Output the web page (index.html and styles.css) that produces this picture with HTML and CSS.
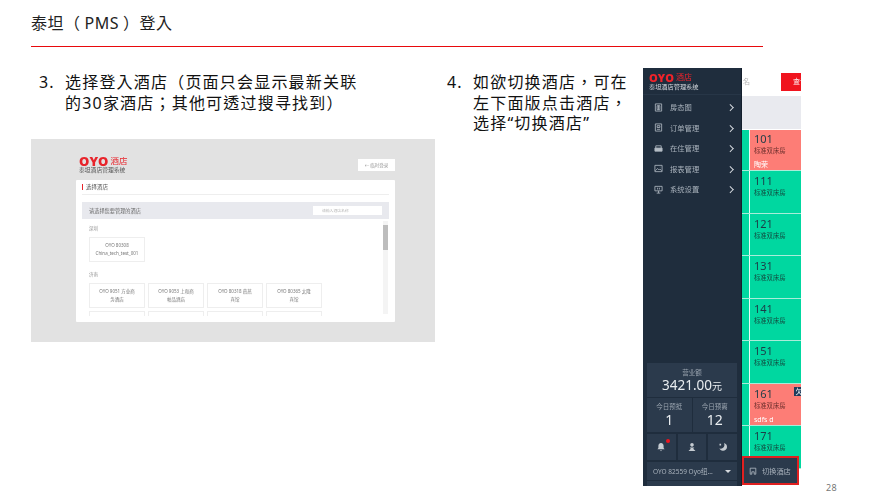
FILE: index.html
```html
<!DOCTYPE html>
<html lang="zh-TW">
<head>
    <meta charset="UTF-8">
    <meta name="viewport" content="width=device-width, initial-scale=1.0">
    <title>泰坦（PMS）登入</title>
    <link rel="stylesheet" href="styles.css">
</head>
<body>
    <div class="slide">
        <h1 class="slide-title">泰坦（<span class="title-latin">PMS</span>）登入</h1>

        <div class="content">
            <div class="col-left">
                <div class="step">
                    <span class="step-no">3.</span>
                    <p>选择登入酒店（页面只会显示最新关联的30家酒店；其他可透过搜寻找到）</p>
                </div>

                <!-- hotel picker screenshot -->
                <div class="shot-hotels">
                    <div class="shot-top">
                        <div class="logo">
                            <div class="logo-main"><b>OYO</b><span>酒店</span></div>
                            <div class="logo-sub">泰坦酒店管理系统</div>
                        </div>
                        <div class="back-btn">← 临时登录</div>
                    </div>
                    <div class="hotel-card">
                        <div class="hotel-card-title">选择酒店</div>
                        <div class="picker-head">
                            <span>请选择您要管理的酒店</span>
                            <div class="picker-search">请输入酒店名称</div>
                        </div>
                        <div class="picker-list">
                            <div class="city">深圳</div>
                            <div class="hotel-row">
                                <div class="hotel">OYO 80308<br>China_tech_test_001</div>
                            </div>
                            <div class="city city-next">济南</div>
                            <div class="hotel-row">
                                <div class="hotel">OYO 9051 方业商<br>务酒店</div>
                                <div class="hotel">OYO 9053 上和商<br>帕品酒店</div>
                                <div class="hotel">OYO 80318 燕燕<br>宾馆</div>
                                <div class="hotel">OYO 80365 太隆<br>宾馆</div>
                            </div>
                            <div class="hotel-row">
                                <div class="hotel"></div>
                                <div class="hotel"></div>
                                <div class="hotel"></div>
                                <div class="hotel"></div>
                            </div>
                            <div class="scrollbar"><div class="scroll-thumb"></div></div>
                        </div>
                    </div>
                </div>
            </div>

            <div class="step step-right">
                <span class="step-no">4.</span>
                <p>如欲切换酒店，可在左下面版点击酒店，选择“切换酒店”</p>
            </div>

            <!-- room board screenshot -->
            <div class="shot-pms">
                <aside class="sidebar">
                    <div class="side-logo">
                        <div class="logo-main"><b>OYO</b><span>酒店</span></div>
                        <div class="logo-sub">泰坦酒店管理系统</div>
                    </div>
                    <ul class="side-menu">
                        <li>
                            <svg viewBox="0 0 10 10"><path d="M1.5 1h7v8h-7zM3.5 3h3v4.500h-3zM5 3v4.500"/></svg>
                            <span>房态图</span><i></i>
                        </li>
                        <li>
                            <svg viewBox="0 0 10 10"><path d="M1.5 1h7v8h-7zM3.500 3h3v2h-3zM3.200 7h3.600"/></svg>
                            <span>订单管理</span><i></i>
                        </li>
                        <li>
                            <svg viewBox="0 0 10 10"><path d="M2 4.500v-2.500h6v2.500"/><path class="solid" d="M1 4.500h8v3.500h-8z"/></svg>
                            <span>在住管理</span><i></i>
                        </li>
                        <li>
                            <svg viewBox="0 0 10 10"><path d="M1 1.500h8v7h-8zM1.500 7.500l2.500-2.500 1.500 1.500 1-1 2 2M6.500 3.500h.5"/></svg>
                            <span>报表管理</span><i></i>
                        </li>
                        <li>
                            <svg viewBox="0 0 10 10"><path d="M1 1.500h8v5h-8zM5 6.500v2.500M3 9h4M4 3v2M6 3v2"/></svg>
                            <span>系统设置</span><i></i>
                        </li>
                    </ul>
                    <div class="side-stats">
                        <div class="revenue">
                            <small>营业额</small>
                            <div class="revenue-num">3421.00<span>元</span></div>
                        </div>
                        <div class="today">
                            <div><small>今日预抵</small><strong>1</strong></div>
                            <div><small>今日预离</small><strong>12</strong></div>
                        </div>
                    </div>
                    <div class="side-tools">
                        <div class="tool tool-bell">
                            <svg viewBox="0 0 10 10"><path class="solid" d="M5 1c-1.800 0-2.600 1.400-2.600 3v2l-1 1.300h7.200l-1-1.300v-2c0-1.600-.8-3-2.600-3zM4 8.300h2l-1 1z"/></svg>
                        </div>
                        <div class="tool">
                            <svg viewBox="0 0 10 10"><path class="solid" d="M5 1a1.800 1.800 0 0 1 1.800 1.800c0 1-.8 1.900-1.800 1.900s-1.800-.9-1.800-1.900a1.800 1.800 0 0 1 1.800-1.800zM2.600 5.500h4.800l-1.200 1.200 2.300 2.300h-7l2.300-2.300z"/></svg>
                        </div>
                        <div class="tool">
                            <svg viewBox="0 0 10 10"><path class="solid" d="M6 1c2 .6 3.200 2.200 3 4.200-.2 2.200-2.200 3.800-4.300 3.600-1.500-.1-2.700-1-3.300-2.200 2.500.5 4.800-.8 5-3 .1-1-.1-1.900-.4-2.600zM1.500 1.800h1.600v1.600h-1.600z"/></svg>
                        </div>
                    </div>
                    <div class="side-select">OYO 82559 Oyo纽...<i></i></div>
                    <div class="side-select side-select-next"></div>
                </aside>

                <div class="board">
                    <div class="board-top">
                        <div class="board-input">名</div>
                        <div class="board-btn">查询</div>
                    </div>
                    <div class="board-band"></div>
                    <div class="rooms">
                        <div class="room room-busy"><b>101</b><small>标准双床房</small><em>陶荣</em></div>
                        <div class="room"><b>111</b><small>标准双床房</small></div>
                        <div class="room"><b>121</b><small>标准双床房</small></div>
                        <div class="room"><b>131</b><small>标准双床房</small></div>
                        <div class="room"><b>141</b><small>标准双床房</small></div>
                        <div class="room"><b>151</b><small>标准双床房</small></div>
                        <div class="room room-busy"><b>161</b><small>标准双床房</small><em>sdfs d</em><span class="badge">欠</span></div>
                        <div class="room"><b>171</b><small>标准双床房</small></div>
                    </div>
                </div>

                <div class="switch-hotel">
                    <svg viewBox="0 0 10 10"><path d="M1.500 1.500h7v7.500h-2v-3h-3v3h-2z"/></svg>
                    <span>切换酒店</span>
                </div>
            </div>

            <div class="page-no">28</div>
        </div>
    </div>
</body>
</html>
```

FILE: styles.css
```css
* {
    box-sizing: border-box;
}

body {
    margin: 0;
    background-color: #fff;
    font-family: "Noto Sans", "Noto Sans CJK TC", sans-serif;
    text-spacing-trim: space-all;
    color: #222;
}

.slide {
    width: 877px;
    height: 501px;
    padding: 0 0 7px 31px;
    display: flex;
    flex-direction: column;
    overflow: hidden;
}

.slide-title {
    width: 732px;
    height: 47px;
    margin: 0;
    padding-top: 11px;
    border-bottom: 1px solid #e8090c;
    font-size: 16px;
    font-weight: 400;
    line-height: 24px;
    letter-spacing: 0.5px;
}

.title-latin {
    margin: 0 4px;
}

.content {
    flex: 1;
    display: flex;
    min-height: 0;
}

.col-left {
    width: 404px;
}

.step {
    display: flex;
    font-size: 16px;
    line-height: 20.5px;
    letter-spacing: 1.2px;
    color: #111;
}

.step p {
    margin: 0;
}

.step-no {
    flex: none;
    width: 26px;
}

.col-left .step {
    height: 92px;
    padding: 25px 70px 0 8px;
}

.step-right {
    width: 196px;
    margin-left: 12px;
    padding: 25px 12px 0 0;
}

/* hotel picker screenshot */
.shot-hotels {
    height: 203px;
    padding: 16px 40px 0 45px;
    background-color: #e2e2e2;
    filter: blur(0.5px);
}

.shot-top {
    height: 25px;
    display: flex;
    justify-content: space-between;
    align-items: flex-start;
    padding-left: 3px;
}

.logo-main {
    display: flex;
    align-items: center;
    height: 12px;
    color: #e8242b;
}

.logo-main b {
    font-size: 13px;
    font-weight: 900;
    letter-spacing: 0.2px;
    line-height: 11px;
}

.logo-main span {
    margin: -1px 0 0 2px;
    font-size: 8.500px;
    line-height: 11px;
}

.logo-sub {
    font-size: 5.800px;
    line-height: 7px;
    color: #555;
}

.back-btn {
    width: 37px;
    height: 12px;
    margin-top: 4px;
    background-color: #fff;
    font-size: 4.500px;
    line-height: 12px;
    text-align: center;
    color: #999;
}

.hotel-card {
    height: 142px;
    padding: 0 6px;
    background-color: #fff;
    border-radius: 1px;
}

.hotel-card-title {
    height: 15px;
    margin-bottom: 7px;
    border-bottom: 1px solid #eee;
    font-size: 5.500px;
    line-height: 14px;
    color: #555;
}

.hotel-card-title::before {
    content: "";
    display: inline-block;
    width: 1px;
    height: 6px;
    margin-right: 3px;
    background-color: #e8242b;
    vertical-align: -1px;
}

.picker-head {
    height: 17px;
    padding: 0 7px;
    display: flex;
    justify-content: space-between;
    align-items: center;
    background-color: #e8e9ee;
    font-size: 5.200px;
    color: #666;
}

.picker-search {
    width: 69px;
    height: 9px;
    padding-left: 9px;
    background-color: #fff;
    font-size: 3.800px;
    line-height: 9px;
    color: #bbb;
}

.picker-list {
    position: relative;
    height: 97px;
    padding: 5px 7px 0;
    overflow: hidden;
}

.city {
    height: 13px;
    font-size: 4.500px;
    line-height: 8px;
    color: #999;
}

.city-next {
    margin-top: 8px;
}

.hotel-row {
    display: flex;
    gap: 3px;
    margin-bottom: 3px;
}

.hotel {
    width: 56px;
    height: 25px;
    padding-top: 4px;
    border: 1px solid #eee;
    font-size: 4.500px;
    line-height: 7.500px;
    text-align: center;
    white-space: nowrap;
    color: #777;
}

.scrollbar {
    position: absolute;
    top: 2px;
    right: 1px;
    bottom: 2px;
    width: 5px;
    background-color: #f4f4f4;
}

.scroll-thumb {
    height: 25px;
    margin-top: 4px;
    background-color: #bdbdbd;
}

/* room board screenshot */
.shot-pms {
    position: relative;
    flex: none;
    width: 158px;
    height: 418px;
    margin: 21px 0 0 0;
    display: flex;
    overflow: hidden;
    filter: blur(0.4px);
}

.sidebar {
    flex: none;
    width: 99px;
    padding: 0 4px;
    background-color: #1f2d3d;
    border-right: 1px solid #141f2c;
    color: #a9b2bc;
}

.side-logo {
    height: 27px;
    margin: 0 -4px;
    padding: 3px 6px 0;
    border-bottom: 1px solid #273647;
}

.side-logo .logo-main {
    height: 12px;
    color: #f0232a;
}

.side-logo .logo-main b {
    font-size: 11px;
}

.side-logo .logo-main span {
    font-size: 8px;
}

.side-logo .logo-sub {
    font-size: 6.200px;
    line-height: 8px;
    color: #d5d9de;
}

.side-menu {
    height: 268px;
    margin: 0;
    padding: 2px 0 0 7px;
    list-style: none;
}

.side-menu li {
    height: 20.500px;
    display: flex;
    align-items: center;
    font-size: 7.300px;
}

.side-menu svg {
    width: 9px;
    height: 9px;
    margin-right: 7px;
    fill: none;
    stroke: #b4bcc5;
    stroke-width: 0.9;
}

.side-menu .solid {
    fill: #b4bcc5;
}

.side-menu span {
    flex: 1;
}

.side-menu i {
    width: 4.500px;
    height: 4.500px;
    margin-right: 5px;
    border-top: 1.200px solid #d5d9de;
    border-right: 1.200px solid #d5d9de;
    transform: rotate(45deg);
}

.side-stats {
    background-color: #2b3a4c;
    text-align: center;
}

.side-stats small {
    display: block;
    font-size: 6.500px;
    line-height: 9px;
    color: #9aa4af;
}

.revenue {
    height: 35px;
    padding-top: 5px;
    border-bottom: 1px solid #1f2d3d;
}

.revenue-num {
    font-size: 13.500px;
    line-height: 16px;
    color: #e9edf0;
}

.revenue-num span {
    font-size: 10px;
}

.today {
    height: 34px;
    display: flex;
}

.today > div {
    flex: 1;
    padding-top: 4px;
}

.today > div + div {
    border-left: 1px solid #1f2d3d;
}

.today strong {
    display: block;
    font-size: 14px;
    font-weight: 400;
    line-height: 17px;
    color: #e9edf0;
}

.side-tools {
    height: 26px;
    margin-top: 2px;
    display: flex;
    gap: 2px;
}

.tool {
    position: relative;
    flex: 1;
    display: flex;
    align-items: center;
    justify-content: center;
    background-color: #2b3a4c;
}

.tool svg {
    width: 10px;
    height: 10px;
}

.tool .solid {
    fill: #c6ccd2;
}

.tool-bell::after {
    content: "";
    position: absolute;
    top: 5px;
    right: 6px;
    width: 4px;
    height: 4px;
    border-radius: 50%;
    background-color: #f0141e;
}

.side-select {
    height: 18px;
    margin-top: 2px;
    padding: 0 6px;
    display: flex;
    align-items: center;
    justify-content: space-between;
    background-color: #2b3a4c;
    font-size: 6.500px;
    color: #a9b2bc;
}

.side-select i {
    width: 0;
    height: 0;
    border-left: 3px solid transparent;
    border-right: 3px solid transparent;
    border-top: 3.500px solid #d5d9de;
}

.side-select-next {
    margin-top: 1px;
}

.board {
    flex: 1;
    min-width: 0;
    background-color: #fff;
}

.board-top {
    height: 29px;
    padding-top: 5px;
    padding-left: 1px;
    display: flex;
    align-items: flex-start;
    border-bottom: 1px solid #e9eaef;
}

.board-input {
    width: 38px;
    height: 18px;
    font-size: 7px;
    line-height: 18px;
    color: #b5b5b5;
    background-color: #fff;
}

.board-btn {
    flex: 1;
    height: 18px;
    padding-left: 12px;
    overflow: hidden;
    white-space: nowrap;
    background-color: #f0141e;
    font-size: 7px;
    line-height: 18px;
    color: #fff;
}

.board-band {
    height: 32px;
    background-color: #e9eaef;
}

.rooms {
    display: flex;
    flex-direction: column;
    margin-top: 1px;
}

.room {
    --room-color: #00d7a0;
    position: relative;
    flex: none;
    height: 42.500px;
    padding: 4px 0 0 12px;
    overflow: hidden;
    border-bottom: 1px solid #a8ecd9;
    background: linear-gradient(to right, #00d7a0 7px, #e9fbf6 7px, #e9fbf6 8px, var(--room-color) 8px);
    color: #12493f;
}

.room:first-child {
    height: 41px;
    padding-top: 3px;
}

.room-busy {
    --room-color: #fd7d76;
    color: #6b2e2c;
}

.room b {
    display: block;
    font-size: 11px;
    font-weight: 400;
    line-height: 12px;
    color: #1c3c47;
}

.room small {
    display: block;
    font-size: 6.300px;
    line-height: 11px;
    white-space: nowrap;
}

.room em {
    display: block;
    margin-top: 4px;
    font-size: 7px;
    font-style: normal;
    line-height: 10px;
    color: #fff;
}

.badge {
    position: absolute;
    top: 3px;
    left: 52px;
    width: 10px;
    height: 9px;
    background-color: #1f3c5c;
    font-size: 7px;
    line-height: 9px;
    text-align: center;
    color: #fff;
}

.switch-hotel {
    position: absolute;
    left: 99px;
    top: 388px;
    width: 57px;
    height: 29px;
    padding-left: 5px;
    display: flex;
    align-items: center;
    gap: 5px;
    background-color: #2b3a4c;
    border: 2px solid #e02020;
    font-size: 7.200px;
    color: #a9b2bc;
}

.switch-hotel svg {
    width: 8px;
    height: 8px;
    fill: none;
    stroke: #b4bcc5;
    stroke-width: 1;
}

.page-no {
    align-self: flex-end;
    margin-left: 25px;
    font-size: 9px;
    line-height: 13px;
    letter-spacing: 0.3px;
    color: #777;
}
```
